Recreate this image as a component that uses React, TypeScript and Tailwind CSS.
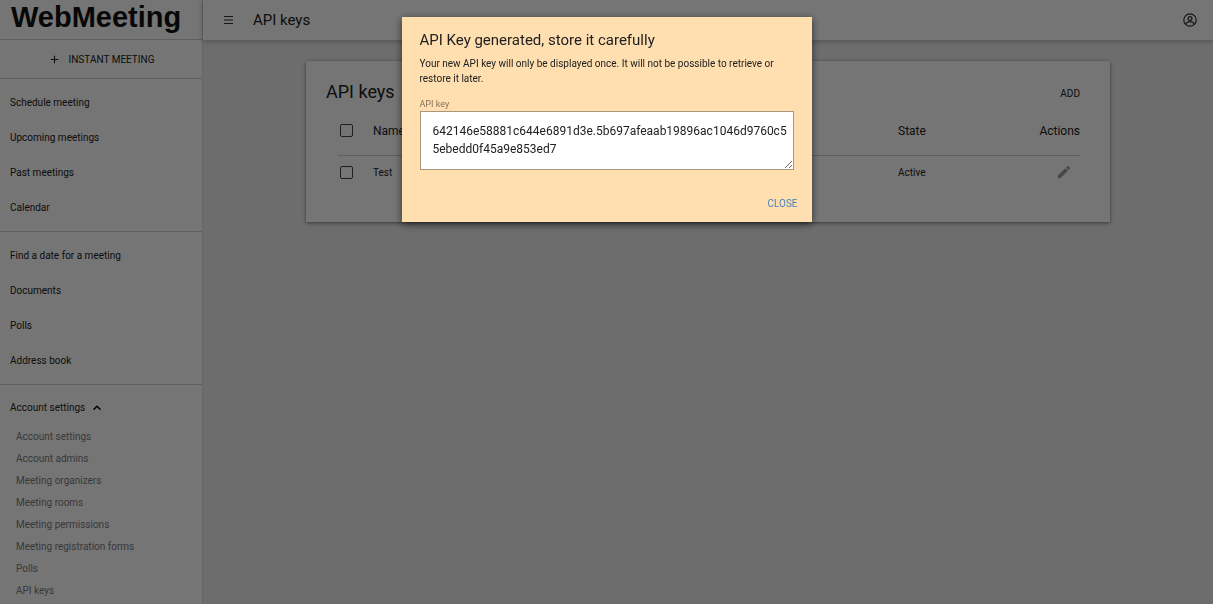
import React from 'react';
import { MdAdd, MdEdit, MdKeyboardArrowUp } from 'react-icons/md';

const meetingLinks = ['Schedule meeting', 'Upcoming meetings', 'Past meetings', 'Calendar'];
const toolLinks = ['Find a date for a meeting', 'Documents', 'Polls', 'Address book'];
const accountLinks = [
  'Account settings',
  'Account admins',
  'Meeting organizers',
  'Meeting rooms',
  'Meeting permissions',
  'Meeting registration forms',
  'Polls',
  'API keys',
];

const apiKey = '642146e58881c644e6891d3e.5b697afeaab19896ac1046d9760c55ebedd0f45a9e853ed7';

const NavGroup = ({ links }: { links: string[] }) => (
  <ul className="border-b border-[#d0d0d0] py-1.5">
    {links.map((label) => (
      <li key={label}>
        <a href="#" className="flex h-[35px] items-center px-2.5">
          {label}
        </a>
      </li>
    ))}
  </ul>
);

const Sidebar = () => (
  <nav className="w-[203px] shrink-0 overflow-hidden border-r border-[#dcdcdc] bg-white text-[10px]">
    {/* Logo */}
    <div className="h-10 border-b border-[#d0d0d0]">
      <svg className="h-full w-full" role="img" aria-label="WebMeeting">
        <text
          x="11"
          y="27"
          fontFamily="'Liberation Sans', Arial, sans-serif"
          fontSize="29"
          fontWeight="bold"
          fill="#111"
        >
          WebMeeting
        </text>
      </svg>
    </div>
    <button className="flex h-[39px] w-full items-center justify-center gap-2 border-b border-[#d0d0d0]">
      <MdAdd size={13} />
      INSTANT MEETING
    </button>
    <NavGroup links={meetingLinks} />
    <NavGroup links={toolLinks} />
    {/* Expanded account section */}
    <div className="pt-[5px]">
      <button className="flex h-[35px] w-full items-center gap-1 px-2.5">
        Account settings
        <MdKeyboardArrowUp size={16} className="text-black" />
      </button>
      <ul className="text-[#7c7c7c]">
        {accountLinks.map((label) => (
          <li key={label}>
            <a href="#" className="flex h-[22px] items-center px-4">
              {label}
            </a>
          </li>
        ))}
      </ul>
    </div>
  </nav>
);

const Header = () => (
  <header className="flex h-10 items-center bg-white pr-4 pl-5 shadow-[0_1px_6px_rgba(0,0,0,0.3)]">
    <button aria-label="Toggle menu" className="text-[#333]">
      <svg width="10" height="10" viewBox="0 0 10 10" stroke="currentColor" strokeWidth="1.2">
        <path d="M1 1.5h9M1 5h9M1 8.5h9" />
      </svg>
    </button>
    <h1 className="ml-5 text-[15px]">API keys</h1>
    <button aria-label="Profile" className="ml-auto text-[#333]">
      <svg width="14" height="14" viewBox="0 0 14 14" fill="none" stroke="currentColor" strokeWidth="1.2">
        <circle cx="7" cy="7" r="6.2" />
        <circle cx="7" cy="5.6" r="1.9" />
        <path d="M3 11.4V10.4C4.2 9 5.6 8.6 7 8.6s2.8.4 4 1.8v1" />
      </svg>
    </button>
  </header>
);

const Checkbox = ({ label }: { label: string }) => (
  <input
    type="checkbox"
    aria-label={label}
    className="block size-[13px] appearance-none rounded-[2px] border border-[#444]"
  />
);

const KeysCard = () => (
  <section className="mx-auto mt-[21px] w-4/5 max-w-[804px] bg-white pr-[30px] pb-[33px] pl-5 shadow-[0_1px_4px_rgba(0,0,0,0.5)]">
    <div className="flex items-end justify-between pt-[18px]">
      <h2 className="text-[18px] leading-[26px]">API keys</h2>
      <button className="text-[10px] leading-[22px]">ADD</button>
    </div>
    <div className="pl-3">
      <table className="w-full table-fixed text-left">
        <thead>
          <tr className="h-[50px] border-b border-[#d0d0d0] text-[12px]">
            <th className="w-[35px] pt-0.5 pl-0.5"><Checkbox label="Select all keys" /></th>
            <th className="pt-0.5 font-normal">Name</th>
            <th className="w-[100px] pt-0.5 font-normal">State</th>
            <th className="w-[82px] pt-0.5 text-right font-normal">Actions</th>
          </tr>
        </thead>
        <tbody>
          <tr className="h-[34px] text-[10px]">
            <td className="pl-0.5"><Checkbox label="Select Test" /></td>
            <td>Test</td>
            <td>Active</td>
            <td>
              <button aria-label="Edit Test" className="mr-2 ml-auto block text-[#999]">
                <MdEdit size={16} />
              </button>
            </td>
          </tr>
        </tbody>
      </table>
    </div>
  </section>
);

const KeyDialog = () => (
  <div className="fixed inset-0 flex items-start justify-center bg-black/54 pt-[17px]">
    <div
      role="dialog"
      aria-labelledby="dialog-title"
      className="w-[410px] bg-[#ffdfb0] px-[18px] pt-[11px] pb-[7px] shadow-[0_2px_8px_rgba(0,0,0,0.6)]"
    >
      <h2 id="dialog-title" className="text-[15px] leading-6">API Key generated, store it carefully</h2>
      <p className="mt-1 text-[10px] leading-[15px]">
        Your new API key will only be displayed once. It will not be possible to retrieve or restore it later.
      </p>
      <label htmlFor="api-key" className="mt-3 block text-[9px] leading-[13px] text-[#85745c]">
        API key
      </label>
      <textarea
        id="api-key"
        readOnly
        defaultValue={apiKey}
        className="block h-[59px] w-full resize overflow-hidden border border-[#a89880] bg-white py-2.5 pr-1 pl-3 text-[12px] leading-[18px] break-all"
      />
      <div className="mt-[21px] flex justify-end">
        <button className="-mr-1 h-6 text-[10px] text-[#4a84bd]">CLOSE</button>
      </div>
    </div>
  </div>
);

const App = () => {
  return (
    <div className="flex h-screen overflow-hidden bg-[#eee] font-['Roboto',sans-serif] text-[#212121]">
      <Sidebar />
      <main className="min-w-0 flex-1">
        <Header />
        <KeysCard />
      </main>
      <KeyDialog />
    </div>
  );
};

export default App;
